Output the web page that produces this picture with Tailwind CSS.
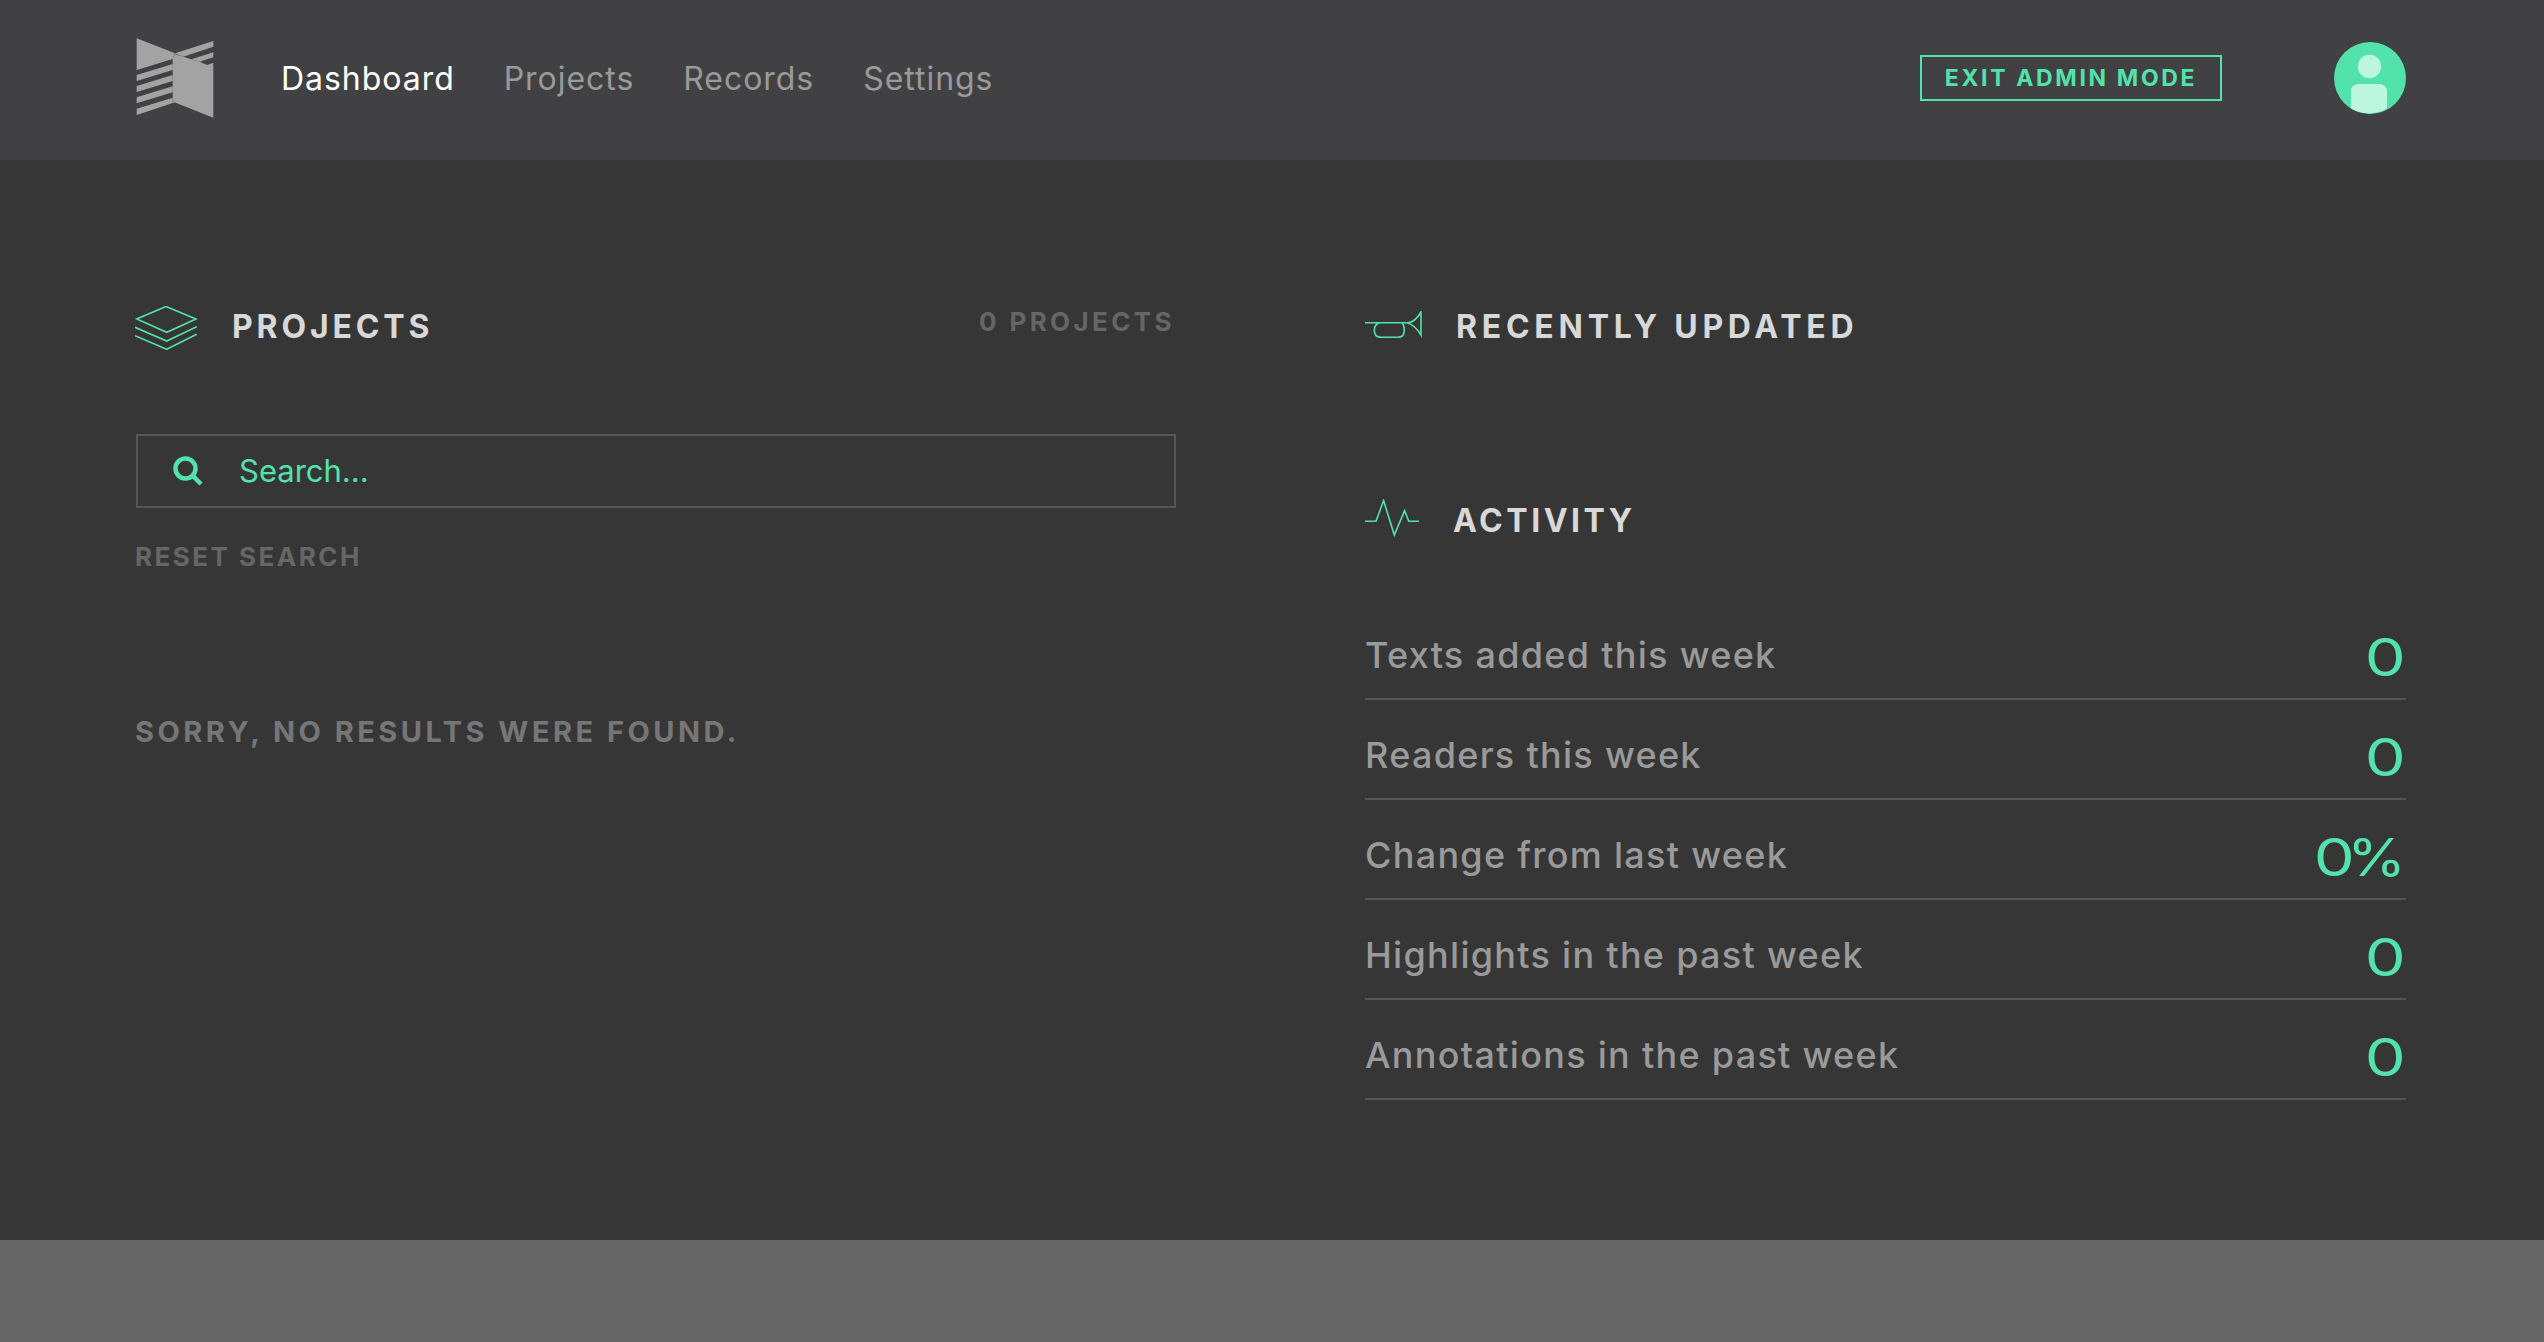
<!DOCTYPE html>
<html>
<head>
<meta charset="utf-8">
<script src="https://cdn.jsdelivr.net/npm/@tailwindcss/browser@4"></script>
</head>
<body class="bg-[#666666] font-['Inter',sans-serif]">
<div class="h-[1342px] flex flex-col overflow-hidden">
  <header class="h-[160px] shrink-0 bg-[#414143] pl-[136px] pr-[138px] flex items-center">
    <svg class="w-[78px] h-[80px] shrink-0 -translate-y-[2px]" viewBox="0 0 78 80" fill="#a3a3a3">
      <path d="M0.7 0.3 L39 15.3 L36.7 21 L0.7 32 Z"/>
      <path d="M0.7 37 L36.7 26 L36.7 32 L0.7 43 Z"/>
      <path d="M0.7 48 L36.7 37 L36.7 43 L0.7 54 Z"/>
      <path d="M0.7 59.3 L36.7 48.3 L36.7 54.3 L0.7 65.3 Z"/>
      <path d="M0.7 70.7 L36.7 59.7 L36.7 65 L0.7 77 Z"/>
      <path d="M39 15.3 L77.3 3 L77.3 8.7 L47.3 18.7 Z"/>
      <path d="M55.3 21.3 L77.3 14.3 L77.3 19.3 L63.7 23.7 Z"/>
      <path d="M36.7 21 L39 16 L47.3 18.7 L55.3 21.3 L63.7 23.7 L71 27 L77.3 24.7 L77.3 79.7 L39 64.5 L36.7 65 Z"/>
    </svg>
    <nav class="ml-[67px] flex items-center gap-[49px] text-[32px] tracking-[0.03em] -translate-y-[1px] text-[#9a9a9a]">
      <span class="text-white">Dashboard</span>
      <span>Projects</span>
      <span>Records</span>
      <span>Settings</span>
    </nav>
    <div class="ml-auto w-[302px] h-[46px] border-[2px] border-[#52e3ac] flex items-center justify-center text-[#52e3ac] text-[23px] font-bold tracking-[0.115em] -translate-y-[2px]">EXIT ADMIN MODE</div>
    <svg class="ml-[112px] w-[72px] h-[72px] shrink-0 -translate-y-[2px]" viewBox="0 0 72 72">
      <circle cx="36" cy="36" r="36" fill="#52e3ac"/>
      <circle cx="35.5" cy="24.5" r="11.7" fill="#bdf6df"/>
      <path d="M17 66.6 V50 Q17 42 25 42 H45 Q53 42 53 50 V66.6 A36 36 0 0 1 17 66.6 Z" fill="#bdf6df"/>
    </svg>
  </header>
  <main class="h-[1080px] shrink-0 bg-[#363636] pl-[135px] pr-[138px] flex">
    <section class="w-[1040px] shrink-0 pt-[143px]">
      <div class="h-[48px] flex items-center justify-between">
        <div class="flex items-center">
          <svg class="w-[62px] h-[44px] shrink-0 translate-y-[1px]" viewBox="0 0 62 44" fill="none" stroke="#52e3ac" stroke-width="1.6">
            <path d="M31 0.5 L61 13 L31.7 26.3 L1.7 13 Z"/>
            <path d="M0 21.3 L31.7 35 L61.7 20.7"/>
            <path d="M0 29.7 L31.7 43.3 L61.7 28.3"/>
          </svg>
          <h2 class="ml-[35px] text-[#d8d8d8] text-[32px] font-bold tracking-[0.12em]">PROJECTS</h2>
        </div>
        <span class="text-[#666666] text-[26px] font-bold tracking-[0.13em] -translate-y-[6px]">0 PROJECTS</span>
      </div>
      <div class="mt-[83px] ml-[1px] w-[1040px] h-[74px] border-[2px] border-[#555555] flex items-center pl-[35px] text-[#52e3ac] text-[31px]">
        <svg class="w-[30px] h-[30px] shrink-0" viewBox="0 0 30 30" fill="none" stroke="#52e3ac" stroke-width="4.5">
          <circle cx="12.5" cy="12.5" r="10"/>
          <path d="M19.5 19.5 L28 28"/>
        </svg>
        <span class="ml-[36px]">Search...</span>
      </div>
      <p class="mt-[29px] text-[#666666] text-[26px] font-bold tracking-[0.095em]">RESET SEARCH</p>
      <p class="mt-[134px] text-[#767676] text-[29px] font-bold tracking-[0.12em]">SORRY, NO RESULTS WERE FOUND.</p>
    </section>
    <section class="ml-[190px] flex-1 pt-[143px]">
      <div class="h-[48px] flex items-center">
        <svg class="w-[57px] h-[27px] shrink-0 -translate-y-[3px]" viewBox="0 0 57 27" fill="none" stroke="#52e3ac" stroke-width="1.6">
          <path d="M0 11.7 H42 Q50 11.7 56 1 V24 Q50 14 42 11.7"/>
          <path d="M14 11.7 Q9.3 14 9.3 19 Q9.3 26.3 16 26.3 H33 Q39.3 26.3 39.3 19 Q39.3 14 37 11.7"/>
        </svg>
        <h2 class="ml-[34px] text-[#d8d8d8] text-[32px] font-bold tracking-[0.148em]">RECENTLY UPDATED</h2>
      </div>
      <div class="mt-[146px] h-[48px] flex items-center">
        <svg class="w-[56px] h-[38px] shrink-0 -translate-y-[3px]" viewBox="0 0 56 38" fill="none" stroke="#52e3ac" stroke-width="1.6">
          <path d="M0 22.3 H11 L18.6 1.5 L29.3 36 L39.6 11.7 L43.8 22.3 H54"/>
        </svg>
        <h2 class="ml-[32px] text-[#d8d8d8] text-[32px] font-bold tracking-[0.11em]">ACTIVITY</h2>
      </div>
      <ul class="mt-[55px]">
        <li class="h-[100px] pt-[12px] border-b-[2px] border-[#555555] flex items-center justify-between text-[#9a9a9a] text-[36px] font-medium tracking-[0.036em]"><span>Texts added this week</span><span class="text-[#52e3ac] text-[52px] font-normal tracking-normal translate-y-[3px] flex"><span class="inline-block scale-x-[1.25] origin-right">0</span></span></li>
        <li class="h-[100px] pt-[12px] border-b-[2px] border-[#555555] flex items-center justify-between text-[#9a9a9a] text-[36px] font-medium tracking-[0.036em]"><span>Readers this week</span><span class="text-[#52e3ac] text-[52px] font-normal tracking-normal translate-y-[3px] flex"><span class="inline-block scale-x-[1.25] origin-right">0</span></span></li>
        <li class="h-[100px] pt-[12px] border-b-[2px] border-[#555555] flex items-center justify-between text-[#9a9a9a] text-[36px] font-medium tracking-[0.036em]"><span>Change from last week</span><span class="text-[#52e3ac] text-[52px] font-normal tracking-normal translate-y-[3px] flex"><span class="inline-block scale-x-[1.25] origin-right">0</span><span class="inline-block scale-x-[1.15] origin-right">%</span></span></li>
        <li class="h-[100px] pt-[12px] border-b-[2px] border-[#555555] flex items-center justify-between text-[#9a9a9a] text-[36px] font-medium tracking-[0.036em]"><span>Highlights in the past week</span><span class="text-[#52e3ac] text-[52px] font-normal tracking-normal translate-y-[3px] flex"><span class="inline-block scale-x-[1.25] origin-right">0</span></span></li>
        <li class="h-[100px] pt-[12px] border-b-[2px] border-[#555555] flex items-center justify-between text-[#9a9a9a] text-[36px] font-medium tracking-[0.036em]"><span>Annotations in the past week</span><span class="text-[#52e3ac] text-[52px] font-normal tracking-normal translate-y-[3px] flex"><span class="inline-block scale-x-[1.25] origin-right">0</span></span></li>
      </ul>
    </section>
  </main>
  <footer class="flex-1 bg-[#666666]"></footer>
</div>
</body>
</html>
